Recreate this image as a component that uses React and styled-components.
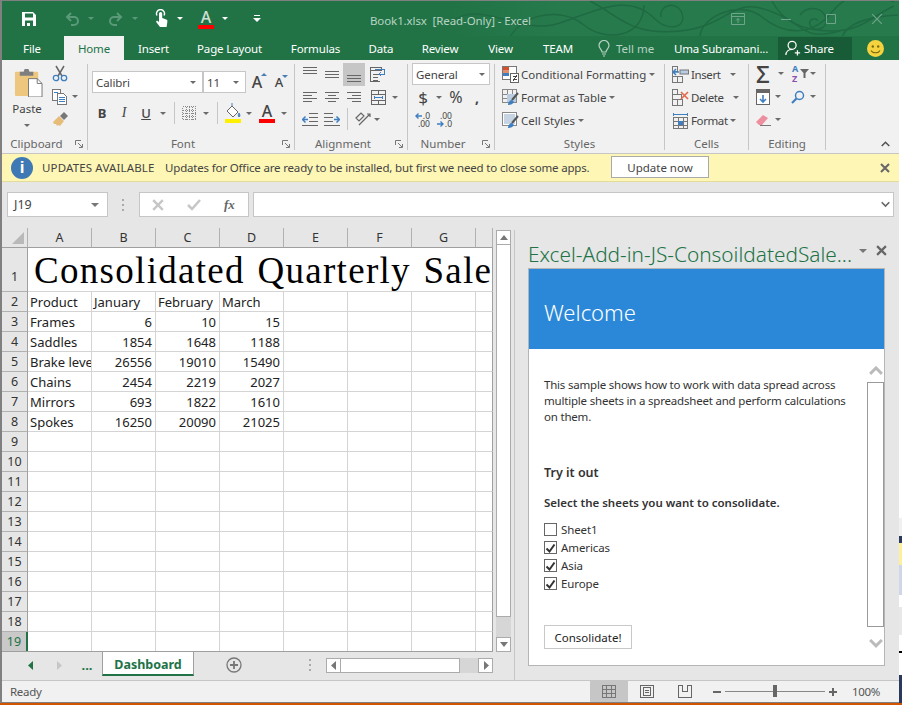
import React from 'react';
import styled, { createGlobalStyle } from 'styled-components';

const GREEN = '#217346';
const GRID_LINE = '#d4d4d4';
const HEAD_LINE = '#b1b1b1';
const UI_FONT = '"Noto Sans", "Open Sans", sans-serif';

const GlobalStyle = createGlobalStyle`
  * { box-sizing: border-box; }
  html, body { margin: 0; padding: 0; overflow: hidden; background: #fff; }
  body { font-family: ${UI_FONT}; font-size: 11.5px; color: #444; }
`;

const Screen = styled.div`
  width: 902px;
  height: 705px;
  display: flex;
  flex-direction: column;
  overflow: hidden;
`;

const ScreenRow = styled.div`
  display: flex;
  height: 703px;
`;

const Desktop = styled.div`
  flex: 1;
  background: linear-gradient(
    to bottom,
    #fff 0 518px,
    #f0f0f0 518px 536px,
    #2b3a5c 536px 543px,
    #fdf09a 543px 565px,
    #ced6e8 565px 595px,
    #fff 595px 607px,
    #e8e8e8 607px 635px,
    #fff 635px 651px,
    #000 651px 653px,
    #fff 653px 675px,
    #2b3a5c 675px 703px
  );
`;

const OrangeLine = styled.div`
  height: 2px;
  background: #d35400;
`;

const Win = styled.div`
  width: 899px;
  height: 703px;
  border-left: 2px solid #808080;
  border-top: 1px solid #808080;
  border-bottom: 1px solid #808080;
  background: #e6e6e6;
  display: flex;
  flex-direction: column;
`;

/* title bar */
const TitleBar = styled.div`
  height: 35px;
  flex: none;
  position: relative;
  display: grid;
  grid-template-columns: 1fr auto 1fr;
  align-items: center;
  background: linear-gradient(to right, ${GREEN} 50%, #267a4c 62%);
  overflow: hidden;
`;

const Swirls = styled.svg`
  position: absolute;
  left: 448px;
  top: 0;
  width: 450px;
  height: 35px;
`;

const Qat = styled.div`
  display: flex;
  align-items: center;
  position: relative;
`;

const QatItem = styled.div`
  margin-left: ${(p) => p.$ml}px;
  width: ${(p) => p.$w}px;
  display: flex;
  justify-content: center;
  align-items: center;
  flex: none;
`;

const DocTitle = styled.div`
  position: relative;
  color: #b7d3c3;
  font-size: 11.5px;
  letter-spacing: -0.1px;
  white-space: pre;
  padding-top: 4px;
`;

const WinControls = styled.div`
  display: flex;
  justify-content: flex-end;
  padding-right: 15px;
  position: relative;
`;

const Caret = styled.span`
  display: inline-block;
  flex: none;
  width: 0;
  height: 0;
  border-left: ${(p) => p.$s || 3}px solid transparent;
  border-right: ${(p) => p.$s || 3}px solid transparent;
  border-top: ${(p) => p.$s || 3}px solid ${(p) => p.$c || '#6a6a6a'};
  margin-left: ${(p) => p.$ml || 0}px;
`;

const ColorA = styled.span`
  display: inline-flex;
  flex-direction: column;
  align-items: center;
  width: 16px;
  height: 20px;
  font-size: 16px;
  line-height: 16px;
  font-weight: 500;
  color: ${(p) => p.$c || '#444'};
  &::after {
    content: '';
    width: 16px;
    height: 4px;
    background: ${(p) => p.$bar};
  }
`;

/* tabs */
const TabRow = styled.div`
  height: 24px;
  flex: none;
  display: flex;
  background: ${GREEN};
`;

const Tab = styled.div`
  width: ${(p) => p.$w}px;
  margin-left: ${(p) => p.$ml || 0}px;
  display: flex;
  align-items: center;
  justify-content: center;
  font-size: 11.5px;
  letter-spacing: -0.15px;
  color: ${(p) => (p.$active ? GREEN : '#fff')};
  background: ${(p) => (p.$active ? '#f1f1f1' : 'transparent')};
`;

const TellMe = styled.div`
  margin-left: 10px;
  display: flex;
  align-items: center;
  gap: 6px;
  font-size: 11.5px;
  color: #b7d3c3;
`;

const TabRight = styled.div`
  margin-left: auto;
  display: flex;
  align-items: center;
  padding-right: 15px;
`;

const UserName = styled.div`
  width: 104px;
  color: #fff;
  font-size: 11.5px;
  letter-spacing: -0.15px;
  white-space: nowrap;
`;

const ShareButton = styled.div`
  width: 74px;
  height: 23px;
  background: #185c37;
  color: #fff;
  font-size: 11.5px;
  letter-spacing: -0.2px;
  display: flex;
  align-items: center;
  padding-left: 7px;
  gap: 3px;
  margin-right: 15px;
`;

/* ribbon */
const Ribbon = styled.div`
  height: 93px;
  flex: none;
  display: flex;
  background: #f1f1f1;
`;

const Group = styled.div`
  width: ${(p) => p.$w}px;
  flex: none;
  display: flex;
  flex-direction: column;
`;

const GroupBody = styled.div`
  height: 75px;
  flex: none;
  padding: ${(p) => p.$pad || '0'};
`;

const GroupLabel = styled.div`
  height: 18px;
  position: relative;
  text-align: center;
  font-size: 11.5px;
  line-height: 18px;
  color: #666;
  padding-right: ${(p) => (p.$launcher ? 16 : 0)}px;
`;

const Launcher = styled.svg`
  position: absolute;
  right: 4px;
  top: 5px;
`;

const GroupDivider = styled.div`
  width: 1px;
  flex: none;
  margin: 4px 0 3px;
  background: #c6c6c6;
`;

const ToolRow = styled.div`
  display: flex;
  align-items: center;
  height: ${(p) => p.$h || 22}px;
  margin-top: ${(p) => p.$mt || 0}px;
  margin-left: ${(p) => p.$ml || 0}px;
`;

const Tool = styled.div`
  width: ${(p) => p.$w}px;
  height: ${(p) => p.$h || 22}px;
  flex: none;
  display: flex;
  align-items: center;
  justify-content: center;
  padding-left: ${(p) => p.$pl || 0}px;
  background: ${(p) => (p.$on ? '#c6c6c6' : 'transparent')};
  font-size: ${(p) => p.$fs || 13}px;
  font-weight: ${(p) => p.$fw || 400};
  font-style: ${(p) => (p.$it ? 'italic' : 'normal')};
  text-decoration: ${(p) => (p.$ul ? 'underline' : 'none')};
  font-family: ${(p) => (p.$serif ? '"Liberation Serif", serif' : 'inherit')};
  color: #444;
`;

const ToolSep = styled.div`
  width: 1px;
  height: 22px;
  flex: none;
  background: #c6c6c6;
  margin-left: ${(p) => p.$l || 0}px;
`;

const ClipLayout = styled.div`
  display: flex;
`;

const PasteButton = styled.div`
  width: 50px;
  height: 75px;
  display: flex;
  flex-direction: column;
  align-items: center;
  padding-top: 8px;
  padding-left: 2px;
  font-size: 11.5px;
  color: #444;
  line-height: 16px;
`;

const PasteCaret = styled(Caret)`
  margin-top: 7px;
  margin-right: 2px;
`;

const PasteText = styled.span`
  margin-top: 4px;
  margin-right: 2px;
`;

const ComboBox = styled.div`
  width: ${(p) => p.$w}px;
  height: ${(p) => p.$h || 22}px;
  flex: none;
  background: #fff;
  border: 1px solid #c6c6c6;
  display: flex;
  align-items: center;
  justify-content: space-between;
  padding: 0 ${(p) => p.$pr || 6}px 0 3px;
  font-size: 11.5px;
  letter-spacing: -0.1px;
  color: #444;
`;

const GrowA = styled.span`
  position: relative;
  font-size: ${(p) => p.$fs}px;
  font-weight: 500;
  color: #444;
  &::after {
    content: '';
    position: absolute;
    right: -5px;
    top: 2px;
    border-left: 3px solid transparent;
    border-right: 3px solid transparent;
    ${(p) => (p.$up ? 'border-bottom: 3px solid #4a7fb5;' : 'border-top: 3px solid #4a7fb5;')}
  }
`;

const ListRow = styled.div`
  height: 23px;
  display: flex;
  align-items: center;
  font-size: 11.5px;
  letter-spacing: ${(p) => p.$ls || 0}px;
  color: #444;
  white-space: nowrap;
`;

const ListIcon = styled.svg`
  flex: none;
  margin-right: 2px;
`;

const DecimalStack = styled.div`
  width: 15px;
  margin-left: ${(p) => p.$ml || 0}px;
  padding-top: 2px;
  display: flex;
  flex-direction: column;
  align-items: flex-end;
  font-size: 8.5px;
  line-height: 8px;
  color: #444;
`;

const DecimalLine = styled.div`
  display: flex;
  align-items: center;
  gap: 1px;
  height: 8px;
`;

const SumGlyph = styled.span`
  font-size: 24px;
  line-height: 22px;
  font-weight: 500;
  color: #444;
`;

const SortText = styled.span`
  display: flex;
  flex-direction: column;
  font-size: 9px;
  line-height: 10px;
  font-weight: 700;
  & > span:first-child { color: #3f7fc0; }
  & > span:last-child { color: #8a4fb0; }
`;

const Collapse = styled.div`
  flex: 1;
  display: flex;
  justify-content: flex-end;
  align-items: flex-end;
  padding: 0 9px 6px 0;
`;

/* update bar */
const UpdateBar = styled.div`
  height: 29px;
  flex: none;
  display: flex;
  align-items: center;
  background: #fdf6b5;
  border-top: 1px solid #c6c6c6;
  border-bottom: 1px solid #e4dc9a;
  font-size: 11.5px;
  color: #444;
  padding-left: 9px;
`;

const InfoIcon = styled.div`
  width: 22px;
  height: 22px;
  border-radius: 50%;
  background: #3f79b5;
  color: #fff;
  font-family: "Liberation Sans", sans-serif;
  font-weight: 700;
  font-size: 17px;
  line-height: 22px;
  text-align: center;
  margin-right: 9px;
  flex: none;
`;

const UpdateTitle = styled.span`
  width: 123px;
  flex: none;
  letter-spacing: 0.15px;
  white-space: nowrap;
`;

const UpdateMsg = styled.span`
  white-space: nowrap;
  width: 446px;
  flex: none;
  letter-spacing: -0.17px;
`;

const UpdateButton = styled.div`
  width: 98px;
  height: 22px;
  background: #fff;
  border: 1px solid #aaa;
  display: flex;
  align-items: center;
  justify-content: center;
  margin-bottom: 1px;
`;

const UpdateClose = styled.div`
  margin-left: auto;
  padding-right: 9px;
  display: flex;
`;

/* formula bar */
const FormulaBar = styled.div`
  height: 46px;
  flex: none;
  display: flex;
  padding: 10px 0 0 5px;
  background: #e6e6e6;
`;

const NameBox = styled.div`
  width: 101px;
  height: 25px;
  background: #fff;
  border: 1px solid #c6c6c6;
  display: flex;
  align-items: center;
  justify-content: space-between;
  padding: 0 8px 0 6px;
  font-size: 12.5px;
  color: #444;
`;

const GripDots = styled.div`
  width: 31px;
  height: 25px;
  display: flex;
  align-items: center;
  justify-content: center;
`;

const FxBox = styled.div`
  width: 110px;
  height: 25px;
  background: #fff;
  border: 1px solid #c6c6c6;
  display: flex;
  align-items: center;
  padding-left: 12px;
  gap: 23px;
  color: #777;
`;

const FxText = styled.span`
  font-family: "Liberation Serif", serif;
  font-style: italic;
  font-weight: 700;
  font-size: 13px;
  color: #666;
`;

const FormulaInput = styled.div`
  width: 641px;
  height: 25px;
  margin-left: 4px;
  background: #fff;
  border: 1px solid #c6c6c6;
  display: flex;
  align-items: center;
  justify-content: flex-end;
  padding-right: 3px;
`;

/* work area */
const Main = styled.div`
  height: 452px;
  flex: none;
  display: flex;
`;

const SheetColumn = styled.div`
  width: 512px;
  flex: none;
  display: flex;
  flex-direction: column;
`;

const SheetRow = styled.div`
  height: 424px;
  flex: none;
  display: flex;
`;

const Grid = styled.div`
  width: 491px;
  flex: none;
  display: grid;
  grid-template-columns: 26px repeat(7, 64px) 17px;
  grid-template-rows: 20px 44px repeat(18, 20px);
  background: #fff;
  font-size: 13px;
  color: #222;
  overflow: hidden;
`;

const Corner = styled.div`
  background: #e6e6e6;
  border-right: 1px solid ${HEAD_LINE};
  border-bottom: 1px solid #9f9f9f;
  position: relative;
  &::after {
    content: '';
    position: absolute;
    right: 3px;
    bottom: 3px;
    border-left: 12px solid transparent;
    border-bottom: 12px solid #b9b9b9;
  }
`;

const ColHead = styled.div`
  background: #e6e6e6;
  border-right: 1px solid ${HEAD_LINE};
  border-bottom: 1px solid #9f9f9f;
  text-align: center;
  font-size: 12.5px;
  line-height: 19px;
  color: #333;
`;

const RowHead = styled.div`
  background: ${(p) => (p.$sel ? '#c9c9c9' : '#e6e6e6')};
  border-right: ${(p) => (p.$sel ? `2px solid ${GREEN}` : `1px solid #9f9f9f`)};
  border-bottom: 1px solid ${HEAD_LINE};
  display: flex;
  justify-content: center;
  align-items: ${(p) => (p.$low ? 'flex-end' : 'center')};
  padding-bottom: ${(p) => (p.$low ? 6 : 0)}px;
  font-size: 12.5px;
  color: ${(p) => (p.$sel ? GREEN : '#333')};
`;

const Cell = styled.div`
  border-right: 1px solid ${(p) => (p.$edge ? '#9f9f9f' : GRID_LINE)};
  border-bottom: 1px solid ${GRID_LINE};
  padding: 0 ${(p) => (p.$num ? 3 : 0)}px 0 ${(p) => (p.$num ? 0 : 2)}px;
  text-align: ${(p) => (p.$num ? 'right' : 'left')};
  line-height: 20px;
  white-space: nowrap;
  overflow: hidden;
`;

const TitleCell = styled.div`
  grid-column: 2 / span 8;
  border-right: 1px solid #9f9f9f;
  border-bottom: 1px solid ${GRID_LINE};
  font-family: "Liberation Serif", serif;
  font-size: 37px;
  letter-spacing: 1.3px;
  word-spacing: 2px;
  line-height: 46px;
  color: #000;
  padding-left: 6px;
  white-space: nowrap;
  overflow: hidden;
`;

const VScroll = styled.div`
  width: 21px;
  flex: none;
  padding: 2px 3px 0 3px;
  display: flex;
  flex-direction: column;
`;

const ScrollButton = styled.div`
  width: 15px;
  height: 15px;
  flex: none;
  background: #fff;
  border: 1px solid #ababab;
  display: flex;
  align-items: center;
  justify-content: center;
`;

const VThumb = styled.div`
  height: 372px;
  background: #fff;
  border: 1px solid #ababab;
  border-top: 0;
`;

const VTrack = styled.div`
  flex: 1;
  background: #d6d6d6;
`;

const TabBar = styled.div`
  height: 29px;
  margin-top: -1px;
  position: relative;
  width: 491px;
  display: flex;
  align-items: flex-start;
  border-top: 1px solid #9f9f9f;
`;

const NavItem = styled.div`
  width: ${(p) => p.$w}px;
  margin-left: ${(p) => p.$ml || 0}px;
  height: 26px;
  display: flex;
  align-items: center;
  justify-content: center;
  font-weight: 700;
  font-size: 13px;
  color: ${GREEN};
`;

const SheetTab = styled.div`
  width: 92px;
  height: 25px;
  margin-top: -1px;
  margin-left: 8px;
  padding-top: 3px;
  background: #fff;
  border: 1px solid #9f9f9f;
  border-bottom: 2px solid ${GREEN};
  color: ${GREEN};
  font-weight: 700;
  font-size: 12.5px;
  display: flex;
  align-items: center;
  justify-content: center;
`;

const HScroll = styled.div`
  width: 167px;
  margin-top: 6px;
  margin-left: 14px;
  display: flex;
`;

const HThumb = styled.div`
  width: 119px;
  height: 15px;
  background: #fff;
  border: 1px solid #ababab;
  border-left: 0;
`;

const HTrack = styled.div`
  flex: 1;
  height: 15px;
  background: #d6d6d6;
`;

const NavIcon = styled.svg`
  display: block;
`;

/* task pane */
const Pane = styled.div`
  flex: 1;
  height: 450px;
  margin-top: 2px;
  border-left: 1px solid #c6c6c6;
  padding-left: 13px;
  display: flex;
  flex-direction: column;
`;

const PaneHeader = styled.div`
  height: 38px;
  flex: none;
  display: flex;
  align-items: center;
`;

const PaneTitle = styled.div`
  width: 331px;
  flex: none;
  font-size: 20.8px;
  font-weight: 300;
  color: ${GREEN};
  white-space: nowrap;
  padding-top: 9px;
`;

const PaneTools = styled.div`
  display: flex;
  align-items: center;
  gap: 9px;
  padding-top: 3px;
`;

const PaneCard = styled.div`
  width: 357px;
  height: 398px;
  flex: none;
  border: 1px solid #b5b5b5;
  background: #fff;
  display: flex;
  flex-direction: column;
`;

const Hero = styled.div`
  height: 80px;
  flex: none;
  background: #2b88d8;
  color: #fff;
  font-size: 22px;
  font-weight: 300;
  padding: 5px 0 0 15px;
  display: flex;
  align-items: center;
`;

const PaneBody = styled.div`
  flex: 1;
  display: flex;
`;

const PaneContent = styled.div`
  flex: 1;
  padding: 28px 0 0 15px;
  color: #333;
  font-size: 11.5px;
`;

const Intro = styled.p`
  margin: 0;
  line-height: 16px;
  width: 312px;
  letter-spacing: -0.2px;
`;

const Heading = styled.div`
  font-weight: 600;
  font-size: ${(p) => p.$fs}px;
  line-height: 16px;
  margin-top: ${(p) => p.$mt}px;
`;

const CheckList = styled.div`
  margin-top: 12px;
  display: flex;
  flex-direction: column;
  gap: 5px;
`;

const CheckRow = styled.label`
  display: flex;
  align-items: center;
  height: 13px;
  gap: 4px;
  letter-spacing: -0.1px;
`;

const Box = styled.span`
  width: 13px;
  height: 13px;
  flex: none;
  border: 1px solid #666;
  display: block;
`;

const ConsolidateButton = styled.div`
  margin-top: 35px;
  width: 88px;
  height: 24px;
  border: 1px solid #c8c8c8;
  display: flex;
  align-items: center;
  justify-content: center;
  color: #222;
`;

const PaneScroll = styled.div`
  width: 17px;
  flex: none;
  display: flex;
  flex-direction: column;
  align-items: center;
  padding-top: 17px;
`;

const PaneThumb = styled.div`
  width: 17px;
  height: 245px;
  flex: none;
  margin: 6px 0 11px;
  border: 1px solid #9a9a9a;
  background: #fff;
`;

/* status bar */
const StatusBar = styled.div`
  height: 22px;
  flex: none;
  display: flex;
  align-items: center;
  background: #f1f1f1;
  border-top: 1px solid #c6c6c6;
  font-size: 11.5px;
  letter-spacing: -0.3px;
  color: #555;
  padding-left: 8px;
`;

const StatusRight = styled.div`
  margin-left: auto;
  display: flex;
  align-items: center;
  height: 100%;
  padding-right: 19px;
`;

const ViewButton = styled.div`
  width: 38px;
  height: 100%;
  display: flex;
  align-items: center;
  justify-content: center;
  background: ${(p) => (p.$on ? '#c6c6c6' : 'transparent')};
`;

const ZoomSlider = styled.div`
  width: 100px;
  height: 1px;
  background: #888;
  margin: 0 4px;
  position: relative;
  &::after {
    content: '';
    position: absolute;
    left: 48px;
    top: -6px;
    width: 4px;
    height: 12px;
    background: #666;
  }
`;

const ZoomSign = styled.span`
  width: 8px;
  height: 2px;
  background: #666;
  position: relative;
  margin-left: ${(p) => p.$ml || 0}px;
  ${(p) =>
    p.$plus &&
    `&::after { content: ''; position: absolute; left: 3px; top: -3px; width: 2px; height: 8px; background: #666; }`}
`;

const ZoomText = styled.span`
  margin-left: 15px;
  width: 28px;
`;

/* drawn icons */
const Close = ({ size = 10, color = '#666', sw = 2 }) => (
  <svg width={size} height={size} viewBox="0 0 10 10">
    <path d="M1 1l8 8M9 1l-8 8" stroke={color} strokeWidth={sw} fill="none" />
  </svg>
);

const Chevron = ({ up, size = 14, color = '#bbb', sw = 3 }) => (
  <svg width={size} height={size * 0.7} viewBox="0 0 14 10">
    <path d={up ? 'M1 8l6-6 6 6' : 'M1 2l6 6 6-6'} stroke={color} strokeWidth={sw} fill="none" />
  </svg>
);

const Arrow = ({ dir, color = '#777' }) => (
  <svg width="6" height="9" viewBox="0 0 6 9" style={dir === 'left' ? undefined : { transform: 'scaleX(-1)' }}>
    <path d="M5 0v9L0 4.5z" fill={color} />
  </svg>
);

const Lines = ({ rows, w = 16, h = 22 }) => (
  <svg width={w} height={h} viewBox={`0 0 ${w} ${h}`} shapeRendering="crispEdges">
    {rows.map(([x1, x2, y]) => (
      <rect key={`${x1}-${y}`} x={x1} y={y} width={x2 - x1} height="1" fill="#666" />
    ))}
  </svg>
);

const Save = () => (
  <svg width="16" height="16" viewBox="0 0 16 16">
    <path fillRule="evenodd" fill="#fff" d="M1 1h11l3 3v11H1zM4 2.5v4h8v-4zM4 9.5V15h2v-3h3v3h3V9.5z" />
  </svg>
);

const Undo = ({ flip }) => (
  <svg width="16" height="16" viewBox="0 0 16 16" style={flip ? { transform: 'scaleX(-1)' } : undefined}>
    <path d="M3 6h7a4 4 0 0 1 0 8H7M7 2L3 6l4 4" stroke="#5a9a78" strokeWidth="2" fill="none" />
  </svg>
);

const Touch = () => (
  <svg width="16" height="20" viewBox="0 0 16 20">
    <path d="M3 6.5a4 4 0 1 1 7 0" stroke="#fff" fill="none" strokeWidth="1.4" />
    <path fill="#fff" d="M5 4.5a1.6 1.6 0 0 1 3.2 0V9l4 1.4c1 .4 1.4 1 1.2 2L12.6 18H6L2 12.8l1-1.2 2 1.3z" />
  </svg>
);

const Customize = () => (
  <svg width="8" height="8" viewBox="0 0 8 8">
    <rect x="1" y="0" width="6" height="1" fill="#fff" />
    <path d="M0 3h8L4 7z" fill="#fff" />
  </svg>
);

const WinRestore = () => (
  <svg width="14" height="12" viewBox="0 0 14 12" fill="none" stroke="#6fa58a">
    <path d="M.5.5h13v11H.5zM.5 3.5h13M7 10V5.5M5 7.5l2-2 2 2" />
  </svg>
);

const WinMin = () => (
  <svg width="14" height="12" viewBox="0 0 14 12">
    <rect x="2" y="6" width="10" height="1" fill="#6fa58a" />
  </svg>
);

const WinMax = () => (
  <svg width="14" height="12" viewBox="0 0 14 12" fill="none" stroke="#6fa58a">
    <path d="M2.5 1.5h9v9h-9z" />
  </svg>
);

const Bulb = () => (
  <svg width="12" height="17" viewBox="0 0 12 17" fill="none" stroke="#b7d3c3" strokeWidth="1.2">
    <path d="M4 12c0-2.5-3-3.5-3-6.5a5 5 0 0 1 10 0C11 8.5 8 9.5 8 12zM4 14h4M5 16h2" />
  </svg>
);

const Person = () => (
  <svg width="16" height="16" viewBox="0 0 18 18" fill="none" stroke="#fff" strokeWidth="1.4">
    <circle cx="8" cy="6" r="4.5" />
    <path d="M1 17c0-4 3-6.5 7-6.5M11 14.5h6M14 11.5v6" />
  </svg>
);

const Smiley = () => (
  <svg width="17" height="17" viewBox="0 0 17 17">
    <circle cx="8.5" cy="8.5" r="8.5" fill="#f5d33f" />
    <circle cx="5.8" cy="6.5" r="1.2" fill="#7a6a10" />
    <circle cx="11.2" cy="6.5" r="1.2" fill="#7a6a10" />
    <path d="M4 10.5c1.5 3 7.5 3 9 0" stroke="#7a6a10" fill="none" strokeWidth="1.1" />
  </svg>
);

const PasteIcon = () => (
  <svg width="29" height="29" viewBox="0 0 30 30">
    <rect x="1" y="4" width="24" height="25" rx="1" fill="#eec77e" />
    <path d="M6 4h4l1-3h4l1 3h4v4H6z" fill="#7f7f7f" />
    <path d="M15 11h9l5 5v14H15z" fill="#fff" stroke="#777" />
    <path d="M24 11v5h5" fill="none" stroke="#777" />
  </svg>
);

const Scissors = () => (
  <svg width="16" height="17" viewBox="0 0 16 17" fill="none">
    <path d="M4 1l6 10M12 1L6 11" stroke="#666" strokeWidth="1.5" />
    <circle cx="4" cy="13" r="2.7" stroke="#3f7fc0" strokeWidth="1.3" />
    <circle cx="12" cy="13" r="2.7" stroke="#3f7fc0" strokeWidth="1.3" />
  </svg>
);

const CopyIcon = () => (
  <svg width="16" height="16" viewBox="0 0 16 16" fill="#fff" stroke="#777" shapeRendering="crispEdges">
    <path d="M.5.5h8v11h-8z" />
    <path d="M5.5 4.5h6l3 3v8h-9z" />
    <path d="M7 8.5h6M7 10.5h6M7 12.5h6M2 3.5h4" stroke="#3f7fc0" />
  </svg>
);

const Painter = () => (
  <svg width="17" height="15" viewBox="0 0 17 15">
    <path d="M1 10l6-6 5 5-4 5-2-1-1 1-1-2-2 0z" fill="#e5bd78" />
    <path d="M8 4l4-4 4 4-4 4z" fill="#777" />
  </svg>
);

const Launch = () => (
  <Launcher width="8" height="8" viewBox="0 0 8 8" fill="none" stroke="#777">
    <path d="M.5 5V.5H6M3 3l4 4M7.5 4v3.5H4" />
  </Launcher>
);

const BorderIcon = () => (
  <svg width="14" height="14" viewBox="0 0 14 14" shapeRendering="crispEdges" stroke="#888" strokeDasharray="1 1" fill="none">
    <path d="M.5.5h13v13H.5zM.5 7h13M7 .5v13M4 .5v13M10 .5v13M.5 4h13M.5 10h13" />
  </svg>
);

const FillIcon = () => (
  <svg width="16" height="20" viewBox="0 0 16 20">
    <path d="M2 8l5-5 6 6-5 5z" fill="#fff" stroke="#666" />
    <path d="M14 10c1 2 1.5 3 0 4-1-1-1-2 0-4zM7 3V0" stroke="#4a7fb5" fill="#4a7fb5" />
    <rect x="0" y="16" width="16" height="4" fill="#ffef00" />
  </svg>
);

const WrapIcon = () => (
  <svg width="16" height="16" viewBox="0 0 16 16" fill="none" shapeRendering="crispEdges">
    <path d="M.5.5h11v3H.5zM.5 3.5v11h9M3 7h7M3 10h5M3 13h5" stroke="#666" />
    <path d="M5 2h9v5h-5M11 5L9 7l2 2" stroke="#3f7fc0" />
  </svg>
);

const MergeIcon = () => (
  <svg width="15" height="15" viewBox="0 0 15 15" fill="none" shapeRendering="crispEdges">
    <path d="M.5.5h14v14H.5zM.5 4.5h14M.5 10.5h14M7.5 .5v4M7.5 10.5v4" stroke="#666" />
    <path d="M3 7.5h9M3.5 6v3M11.5 6v3" stroke="#3f7fc0" />
  </svg>
);

const IndentIcon = ({ flip }) => (
  <svg width="16" height="13" viewBox="0 0 16 13" fill="none" style={flip ? { transform: 'scaleX(-1)' } : undefined}>
    <path d="M7 .5h9M7 4.5h9M7 8.5h9M0 12.5h16" stroke="#666" shapeRendering="crispEdges" />
    <path d="M6 6.5H1M3.5 3.5l-3 3 3 3" stroke="#3f7fc0" strokeWidth="1.5" />
  </svg>
);

const OrientIcon = () => (
  <svg width="18" height="16" viewBox="0 0 18 16" fill="none" stroke="#666">
    <path d="M2 7l5-5 3 3-5 5zM5 14L16 3M13 3h3v3" strokeWidth="1.2" />
  </svg>
);

const DecArrow = ({ back }) => (
  <svg width="7" height="6" viewBox="0 0 7 6" fill="none" stroke="#3f7fc0" strokeWidth="1.4">
    <path d={back ? 'M7 3H1M3.5 .5L1 3l2.5 2.5' : 'M0 3h6M3.5 .5L6 3 3.5 5.5'} />
  </svg>
);

const CondIcon = () => (
  <ListIcon width="17" height="17" viewBox="0 0 17 17" shapeRendering="crispEdges">
    <path d="M.5.5h14v13H.5z" fill="#fff" stroke="#777" />
    <rect x="1" y="1" width="6" height="3" fill="#d2502c" />
    <rect x="1" y="4" width="6" height="3" fill="#e68b6a" />
    <rect x="1" y="7" width="6" height="3" fill="#3f7fc0" />
    <path d="M8.5 7.5h8v9h-8z" fill="#fff" stroke="#666" />
    <path d="M10.5 10.5h4M10.5 13.5h4M11.5 15l3-6" stroke="#444" fill="none" />
  </ListIcon>
);

const TableIcon = () => (
  <ListIcon width="17" height="17" viewBox="0 0 17 17">
    <path d="M.5.5h14v13H.5zM5 .5v13M10 .5v13M.5 5h14M.5 9h14" fill="none" stroke="#888" shapeRendering="crispEdges" />
    <rect x="5" y="5" width="9" height="8" fill="#b9cce0" />
    <path d="M16 4l-6 7" stroke="#555" strokeWidth="2" />
    <path d="M6 16c0-3 2-5 4-5l2 2c-1 2-3 3-6 3z" fill="#3f7fc0" />
  </ListIcon>
);

const StyleIcon = () => (
  <ListIcon width="17" height="17" viewBox="0 0 17 17">
    <path d="M.5.5h14v13H.5z" fill="#fff" stroke="#888" shapeRendering="crispEdges" />
    <rect x="2" y="2" width="11" height="10" fill="#c5d3e3" />
    <path d="M16 4l-6 7" stroke="#555" strokeWidth="2" />
    <path d="M6 16c0-3 2-5 4-5l2 2c-1 2-3 3-6 3z" fill="#3f7fc0" />
  </ListIcon>
);

const InsertIcon = () => (
  <ListIcon width="17" height="17" viewBox="0 0 17 17" fill="none">
    <path d="M.5 .5h5v5h-5zM.5 10.5h5v6h-5zM5.5 10.5h5v6h-5M.5 5.5v5" stroke="#777" shapeRendering="crispEdges" />
    <rect x="8" y="4" width="8.5" height="4" fill="#b9cce0" stroke="#777" />
    <path d="M7 6H1.5M4 3L1 6l3 3" stroke="#3f7fc0" strokeWidth="1.5" />
  </ListIcon>
);

const DeleteIcon = () => (
  <ListIcon width="17" height="17" viewBox="0 0 17 17" fill="none">
    <path d="M.5 .5h5v5h-5zM.5 10.5h5v6h-5zM5.5 10.5h5v6h-5M.5 5.5v5M5.5 5.5h4v5" stroke="#777" shapeRendering="crispEdges" />
    <path d="M9 3l7 7M16 3l-7 7" stroke="#e4674a" strokeWidth="1.6" />
  </ListIcon>
);

const FormatIcon = () => (
  <ListIcon width="17" height="17" viewBox="0 0 17 17" fill="none">
    <path d="M1 2h15M1.5 .5v3M15.5 .5v3" stroke="#3f7fc0" shapeRendering="crispEdges" />
    <path d="M1.5 5.5h14v11h-14zM1.5 9h14M1.5 13h14M6 5.5v11M11 5.5v11" stroke="#777" shapeRendering="crispEdges" />
    <rect x="6" y="9" width="5" height="4" fill="#3f7fc0" />
  </ListIcon>
);

const FillDown = () => (
  <svg width="14" height="16" viewBox="0 0 14 16" shapeRendering="crispEdges">
    <rect x=".5" y=".5" width="13" height="15" fill="#fff" stroke="#666" />
    <rect x="0" y="0" width="14" height="4" fill="#666" />
    <path d="M7 6v7M4 10l3 3 3-3" stroke="#3f7fc0" strokeWidth="1.6" fill="none" shapeRendering="auto" />
  </svg>
);

const SearchIcon = () => (
  <svg width="14" height="14" viewBox="0 0 14 14" fill="none" stroke="#3f7fc0">
    <circle cx="8.5" cy="5.5" r="4" strokeWidth="1.5" />
    <path d="M5.5 8.5L1 13" strokeWidth="2.2" />
  </svg>
);

const Eraser = () => (
  <svg width="16" height="14" viewBox="0 0 16 14">
    <path d="M1 9l7-7 5 3-6 7H4z" fill="#ee8fa0" />
    <rect x="5" y="12" width="11" height="1" fill="#777" />
  </svg>
);

const FilterIcon = () => (
  <svg width="9" height="9" viewBox="0 0 9 9">
    <path d="M0 0h9L5.5 4v5h-2V4z" fill="#666" />
  </svg>
);

const Check = () => (
  <svg width="11" height="11" viewBox="0 0 11 11">
    <path d="M1.5 5.5l3 3 5-7" stroke="#333" strokeWidth="2" fill="none" />
  </svg>
);

const Grip = () => (
  <svg width="3" height="12" viewBox="0 0 3 12">
    <rect x="0" y="0" width="2" height="2" fill="#aaa" />
    <rect x="0" y="5" width="2" height="2" fill="#aaa" />
    <rect x="0" y="10" width="2" height="2" fill="#aaa" />
  </svg>
);

const ViewNormal = () => (
  <svg width="14" height="13" viewBox="0 0 14 13" fill="none" stroke="#777" shapeRendering="crispEdges">
    <path d="M.5.5h13v12H.5zM.5 4.5h13M.5 8.5h13M4.5 .5v12M9.5 .5v12" />
  </svg>
);

const ViewLayout = () => (
  <svg width="14" height="13" viewBox="0 0 14 13" fill="none" stroke="#666" shapeRendering="crispEdges">
    <path d="M.5.5h13v12H.5zM3.5 2.5h7v8h-7zM5 5h4M5 7h4" />
  </svg>
);

const ViewBreak = () => (
  <svg width="14" height="13" viewBox="0 0 14 13" fill="none" stroke="#666" shapeRendering="crispEdges">
    <path d="M.5 .5h4v6h5v-6h4v12H.5z" />
  </svg>
);

const SWIRLS = [
  'M0 22c30-26 70 14 110 0S180-8 205 18c14 14 34 8 26-8-6-10-22-6-20 6',
  'M60 36c14-24 52-30 74-12s60 12 60-20',
  'M140 0c30 15 40 35 90 30s50-35 90-20 30 30 70 20',
  'M250 36c0-20 40-38 62-20s50 20 70-5 42-18 62-10',
  'M322 0c10 20 30 30 60 30s40-15 62-25',
  'M392 36c5-12 20-20 56-22',
  'M350 14c8-10 24-8 26 4 2 10-12 14-16 6-2-6 6-8 8-4',
];

const COLUMNS = ['A', 'B', 'C', 'D', 'E', 'F', 'G', ''];

const SALES = [
  ['Product', 'January', 'February', 'March'],
  ['Frames', 6, 10, 15],
  ['Saddles', 1854, 1648, 1188],
  ['Brake levers', 26556, 19010, 15490],
  ['Chains', 2454, 2219, 2027],
  ['Mirrors', 693, 1822, 1610],
  ['Spokes', 16250, 20090, 21025],
];

const SHEETS = [
  ['Sheet1', false],
  ['Americas', true],
  ['Asia', true],
  ['Europe', true],
];

const renderRows = () => {
  const rows = [];
  for (let r = 2; r <= 19; r++) {
    const data = SALES[r - 2] || [];
    rows.push(<RowHead key={`h${r}`} $sel={r === 19}>{r}</RowHead>);
    COLUMNS.forEach((_, c) => {
      const value = data[c];
      rows.push(
        <Cell key={`${r}-${c}`} $num={typeof value === 'number'} $edge={c === 7}>
          {value}
        </Cell>
      );
    });
  }
  return rows;
};

const TitleArea = () => (
  <>
    <TitleBar>
      <Swirls viewBox="0 0 450 35" fill="none" stroke="#1f6a42" strokeWidth="1.5">
        {SWIRLS.map((d) => (
          <path key={d} d={d} />
        ))}
      </Swirls>
      <Qat>
        <QatItem $ml={19} $w={16}><Save /></QatItem>
        <QatItem $ml={27} $w={16}><Undo /></QatItem>
        <QatItem $ml={7} $w={7}><Caret $c="#5a9a78" /></QatItem>
        <QatItem $ml={14} $w={16}><Undo flip /></QatItem>
        <QatItem $ml={7} $w={7}><Caret $c="#5a9a78" /></QatItem>
        <QatItem $ml={16} $w={16}><Touch /></QatItem>
        <QatItem $ml={6} $w={7}><Caret $c="#fff" /></QatItem>
        <QatItem $ml={15} $w={16}><ColorA $c="#cfe0d6" $bar="#f00">A</ColorA></QatItem>
        <QatItem $ml={7} $w={7}><Caret $c="#fff" /></QatItem>
        <QatItem $ml={25} $w={8}><Customize /></QatItem>
      </Qat>
      <DocTitle>Book1.xlsx  [Read-Only] - Excel</DocTitle>
      <WinControls>
        <QatItem $ml={0} $w={14}><WinRestore /></QatItem>
        <QatItem $ml={34} $w={14}><WinMin /></QatItem>
        <QatItem $ml={31} $w={14}><WinMax /></QatItem>
        <QatItem $ml={32} $w={14}><Close size={12} color="#6fa58a" sw={1} /></QatItem>
      </WinControls>
    </TitleBar>
    <TabRow>
      <Tab $w={60}>File</Tab>
      <Tab $w={60} $ml={2} $active>Home</Tab>
      <Tab $w={59}>Insert</Tab>
      <Tab $w={93}>Page Layout</Tab>
      <Tab $w={79}>Formulas</Tab>
      <Tab $w={52}>Data</Tab>
      <Tab $w={66}>Review</Tab>
      <Tab $w={55}>View</Tab>
      <Tab $w={60}>TEAM</Tab>
      <TellMe><Bulb />Tell me</TellMe>
      <TabRight>
        <UserName>Uma Subramani...</UserName>
        <ShareButton><Person />Share</ShareButton>
        <Smiley />
      </TabRight>
    </TabRow>
  </>
);

const RibbonArea = () => (
  <Ribbon>
    <Group $w={85}>
      <GroupBody>
        <ClipLayout>
          <PasteButton>
            <PasteIcon />
            <PasteText>Paste</PasteText>
            <PasteCaret />
          </PasteButton>
          <div>
            <ToolRow $h={23} $mt={2}><Tool $w={16} $h={23}><Scissors /></Tool></ToolRow>
            <ToolRow $h={23}><Tool $w={16} $h={23}><CopyIcon /></Tool><Caret $ml={4} /></ToolRow>
            <ToolRow $h={23}><Tool $w={17} $h={23}><Painter /></Tool></ToolRow>
          </div>
        </ClipLayout>
      </GroupBody>
      <GroupLabel $launcher>Clipboard<Launch /></GroupLabel>
    </Group>
    <GroupDivider />
    <Group $w={206}>
      <GroupBody $pad="11px 0 0 4px">
        <ToolRow>
          <ComboBox $w={111}>Calibri<Caret /></ComboBox>
          <ComboBox $w={43}>11<Caret /></ComboBox>
          <Tool $w={22}><GrowA $fs={16} $up>A</GrowA></Tool>
          <Tool $w={22}><GrowA $fs={13}>A</GrowA></Tool>
        </ToolRow>
        <ToolRow $mt={9} $ml={-1}>
          <Tool $w={22} $fw={700}>B</Tool>
          <Tool $w={22} $it $serif $fs={14}>I</Tool>
          <Tool $w={22} $ul $fw={500}>U</Tool>
          <Tool $w={12}><Caret /></Tool>
          <ToolSep $l={5} />
          <Tool $w={28}><BorderIcon /></Tool>
          <Tool $w={6}><Caret /></Tool>
          <ToolSep $l={8} />
          <Tool $w={23} $pl={7}><FillIcon /></Tool>
          <Tool $w={15}><Caret /></Tool>
          <Tool $w={22}><ColorA $bar="#f00">A</ColorA></Tool>
          <Tool $w={11}><Caret /></Tool>
        </ToolRow>
      </GroupBody>
      <GroupLabel $launcher>Font<Launch /></GroupLabel>
    </Group>
    <GroupDivider />
    <Group $w={112}>
      <GroupBody $pad="3px 0 0 4px">
        <ToolRow $h={23}>
          <Tool $w={22} $h={23}><Lines h={23} w={14} rows={[[0, 14, 4], [0, 14, 7], [0, 14, 10]]} /></Tool>
          <Tool $w={22} $h={23}><Lines h={23} w={14} rows={[[0, 14, 8], [0, 14, 11], [0, 14, 14]]} /></Tool>
          <Tool $w={22} $h={23} $on><Lines h={23} w={14} rows={[[0, 14, 12], [0, 14, 15], [0, 14, 18]]} /></Tool>
          <Tool $w={26} $h={23}><WrapIcon /></Tool>
        </ToolRow>
        <ToolRow>
          <Tool $w={22}><Lines w={14} rows={[[0, 14, 6], [0, 9, 9], [0, 14, 12], [0, 9, 15]]} /></Tool>
          <Tool $w={22}><Lines w={14} rows={[[0, 14, 6], [3, 11, 9], [0, 14, 12], [3, 11, 15]]} /></Tool>
          <Tool $w={22}><Lines w={14} rows={[[0, 14, 6], [5, 14, 9], [0, 14, 12], [5, 14, 15]]} /></Tool>
          <Tool $w={26}><MergeIcon /></Tool>
          <Caret $ml={1} />
        </ToolRow>
        <ToolRow>
          <Tool $w={22}><IndentIcon /></Tool>
          <Tool $w={22}><IndentIcon flip /></Tool>
          <ToolSep $l={4} />
          <Tool $w={26} $pl={4}><OrientIcon /></Tool>
          <Caret />
        </ToolRow>
      </GroupBody>
      <GroupLabel $launcher>Alignment<Launch /></GroupLabel>
    </Group>
    <GroupDivider />
    <Group $w={86}>
      <GroupBody $pad="3px 0 0 4px">
        <ComboBox $w={78} $pr={4}>General<Caret /></ComboBox>
        <ToolRow $mt={1}>
          <Tool $w={22} $fs={17}>$</Tool>
          <Caret $ml={2} />
          <Tool $w={28} $fs={16}>%</Tool>
          <Tool $w={14} $fs={14} $fw={700}>,</Tool>
        </ToolRow>
        <ToolRow $ml={3}>
          <DecimalStack>
            <DecimalLine><DecArrow back />.0</DecimalLine>
            <DecimalLine>.00</DecimalLine>
          </DecimalStack>
          <DecimalStack $ml={7}>
            <DecimalLine>.00</DecimalLine>
            <DecimalLine><DecArrow />.0</DecimalLine>
          </DecimalStack>
        </ToolRow>
      </GroupBody>
      <GroupLabel $launcher>Number<Launch /></GroupLabel>
    </Group>
    <GroupDivider />
    <Group $w={169}>
      <GroupBody $pad="3px 0 0 7px">
        <ListRow><CondIcon />Conditional Formatting<Caret $ml={3} /></ListRow>
        <ListRow><TableIcon />Format as Table<Caret $ml={3} /></ListRow>
        <ListRow><StyleIcon />Cell Styles<Caret $ml={3} /></ListRow>
      </GroupBody>
      <GroupLabel>Styles</GroupLabel>
    </Group>
    <GroupDivider />
    <Group $w={83}>
      <GroupBody $pad="3px 0 0 7px">
        <ListRow $ls={-0.4}><InsertIcon />Insert<Caret $ml={9} /></ListRow>
        <ListRow $ls={-0.4}><DeleteIcon />Delete<Caret $ml={9} /></ListRow>
        <ListRow $ls={-0.4}><FormatIcon />Format<Caret $ml={2} /></ListRow>
      </GroupBody>
      <GroupLabel>Cells</GroupLabel>
    </Group>
    <GroupDivider />
    <Group $w={76}>
      <GroupBody $pad="2px 0 0 5px">
        <ToolRow $h={23}>
          <Tool $w={18} $h={23}><SumGlyph>Σ</SumGlyph></Tool>
          <Caret $ml={6} />
          <Tool $w={16} $h={23} $pl={6}><SortText><span>A</span><span>Z</span></SortText></Tool>
          <FilterIcon />
          <Caret $ml={1} />
        </ToolRow>
        <ToolRow $h={23}>
          <Tool $w={18} $h={23}><FillDown /></Tool>
          <Caret $ml={3} />
          <Tool $w={24} $h={23} $pl={10}><SearchIcon /></Tool>
          <Caret $ml={5} />
        </ToolRow>
        <ToolRow $h={23}>
          <Tool $w={18} $h={23}><Eraser /></Tool>
          <Caret $ml={3} />
        </ToolRow>
      </GroupBody>
      <GroupLabel>Editing</GroupLabel>
    </Group>
    <GroupDivider />
    <Collapse><Chevron up size={9} color="#555" sw={2.5} /></Collapse>
  </Ribbon>
);

const App = () => (
  <Screen>
    <GlobalStyle />
    <ScreenRow>
      <Win>
        <TitleArea />
        <RibbonArea />
        <UpdateBar>
          <InfoIcon>i</InfoIcon>
          <UpdateTitle>UPDATES AVAILABLE</UpdateTitle>
          <UpdateMsg>Updates for Office are ready to be installed, but first we need to close some apps.</UpdateMsg>
          <UpdateButton>Update now</UpdateButton>
          <UpdateClose><Close /></UpdateClose>
        </UpdateBar>
        <FormulaBar>
          <NameBox>J19<Caret $s={4} $c="#777" /></NameBox>
          <GripDots><Grip /></GripDots>
          <FxBox>
            <Close size={12} color="#c6c6c6" />
            <svg width="14" height="12" viewBox="0 0 14 12">
              <path d="M1 6l4 4 8-9" stroke="#c6c6c6" strokeWidth="2.5" fill="none" />
            </svg>
            <FxText>fx</FxText>
          </FxBox>
          <FormulaInput><Chevron size={9} color="#666" sw={2.5} /></FormulaInput>
        </FormulaBar>
        <Main>
          <SheetColumn>
            <SheetRow>
              <Grid>
                <Corner />
                {COLUMNS.map((c, i) => (
                  <ColHead key={i}>{c}</ColHead>
                ))}
                <RowHead $low>1</RowHead>
                <TitleCell>Consolidated Quarterly Sales</TitleCell>
                {renderRows()}
              </Grid>
              <VScroll>
                <ScrollButton><svg width="8" height="5" viewBox="0 0 8 5"><path d="M0 5l4-5 4 5z" fill="#777" /></svg></ScrollButton>
                <VThumb />
                <VTrack />
                <ScrollButton><svg width="8" height="5" viewBox="0 0 8 5"><path d="M0 0l4 5 4-5z" fill="#777" /></svg></ScrollButton>
              </VScroll>
            </SheetRow>
            <TabBar>
              <NavItem $w={14} $ml={22}><Arrow dir="left" color={GREEN} /></NavItem>
              <NavItem $w={14} $ml={14}><Arrow dir="right" color="#c6c6c6" /></NavItem>
              <NavItem $w={14} $ml={14}>...</NavItem>
              <SheetTab>Dashboard</SheetTab>
              <NavItem $w={16} $ml={32}>
                <NavIcon width="16" height="16" viewBox="0 0 16 16" fill="none" stroke="#777">
                  <circle cx="8" cy="8" r="7" strokeWidth="1.3" />
                  <path d="M8 4v8M4 8h8" strokeWidth="1.8" />
                </NavIcon>
              </NavItem>
              <NavItem $w={4} $ml={66}><Grip /></NavItem>
              <HScroll>
                <ScrollButton><Arrow dir="left" /></ScrollButton>
                <HThumb />
                <HTrack />
                <ScrollButton><Arrow dir="right" /></ScrollButton>
              </HScroll>
            </TabBar>
          </SheetColumn>
          <Pane>
            <PaneHeader>
              <PaneTitle>Excel-Add-in-JS-ConsoildatedSale...</PaneTitle>
              <PaneTools>
                <Caret $s={4.5} $c="#777" />
                <Close size={11} color="#666" />
              </PaneTools>
            </PaneHeader>
            <PaneCard>
              <Hero>Welcome</Hero>
              <PaneBody>
                <PaneContent>
                  <Intro>This sample shows how to work with data spread across multiple sheets in a spreadsheet and perform calculations on them.</Intro>
                  <Heading $fs={12.5} $mt={40}>Try it out</Heading>
                  <Heading $fs={11.5} $mt={14}>Select the sheets you want to consolidate.</Heading>
                  <CheckList>
                    {SHEETS.map(([name, on]) => (
                      <CheckRow key={name}>
                        <Box>{on && <Check />}</Box>
                        {name}
                      </CheckRow>
                    ))}
                  </CheckList>
                  <ConsolidateButton>Consolidate!</ConsolidateButton>
                </PaneContent>
                <PaneScroll>
                  <Chevron up />
                  <PaneThumb />
                  <Chevron />
                </PaneScroll>
              </PaneBody>
            </PaneCard>
          </Pane>
        </Main>
        <StatusBar>
          Ready
          <StatusRight>
            <ViewButton $on><ViewNormal /></ViewButton>
            <ViewButton><ViewLayout /></ViewButton>
            <ViewButton><ViewBreak /></ViewButton>
            <ZoomSign $ml={9} />
            <ZoomSlider />
            <ZoomSign $plus />
            <ZoomText>100%</ZoomText>
          </StatusRight>
        </StatusBar>
      </Win>
      <Desktop />
    </ScreenRow>
    <OrangeLine />
  </Screen>
);

export default App;
